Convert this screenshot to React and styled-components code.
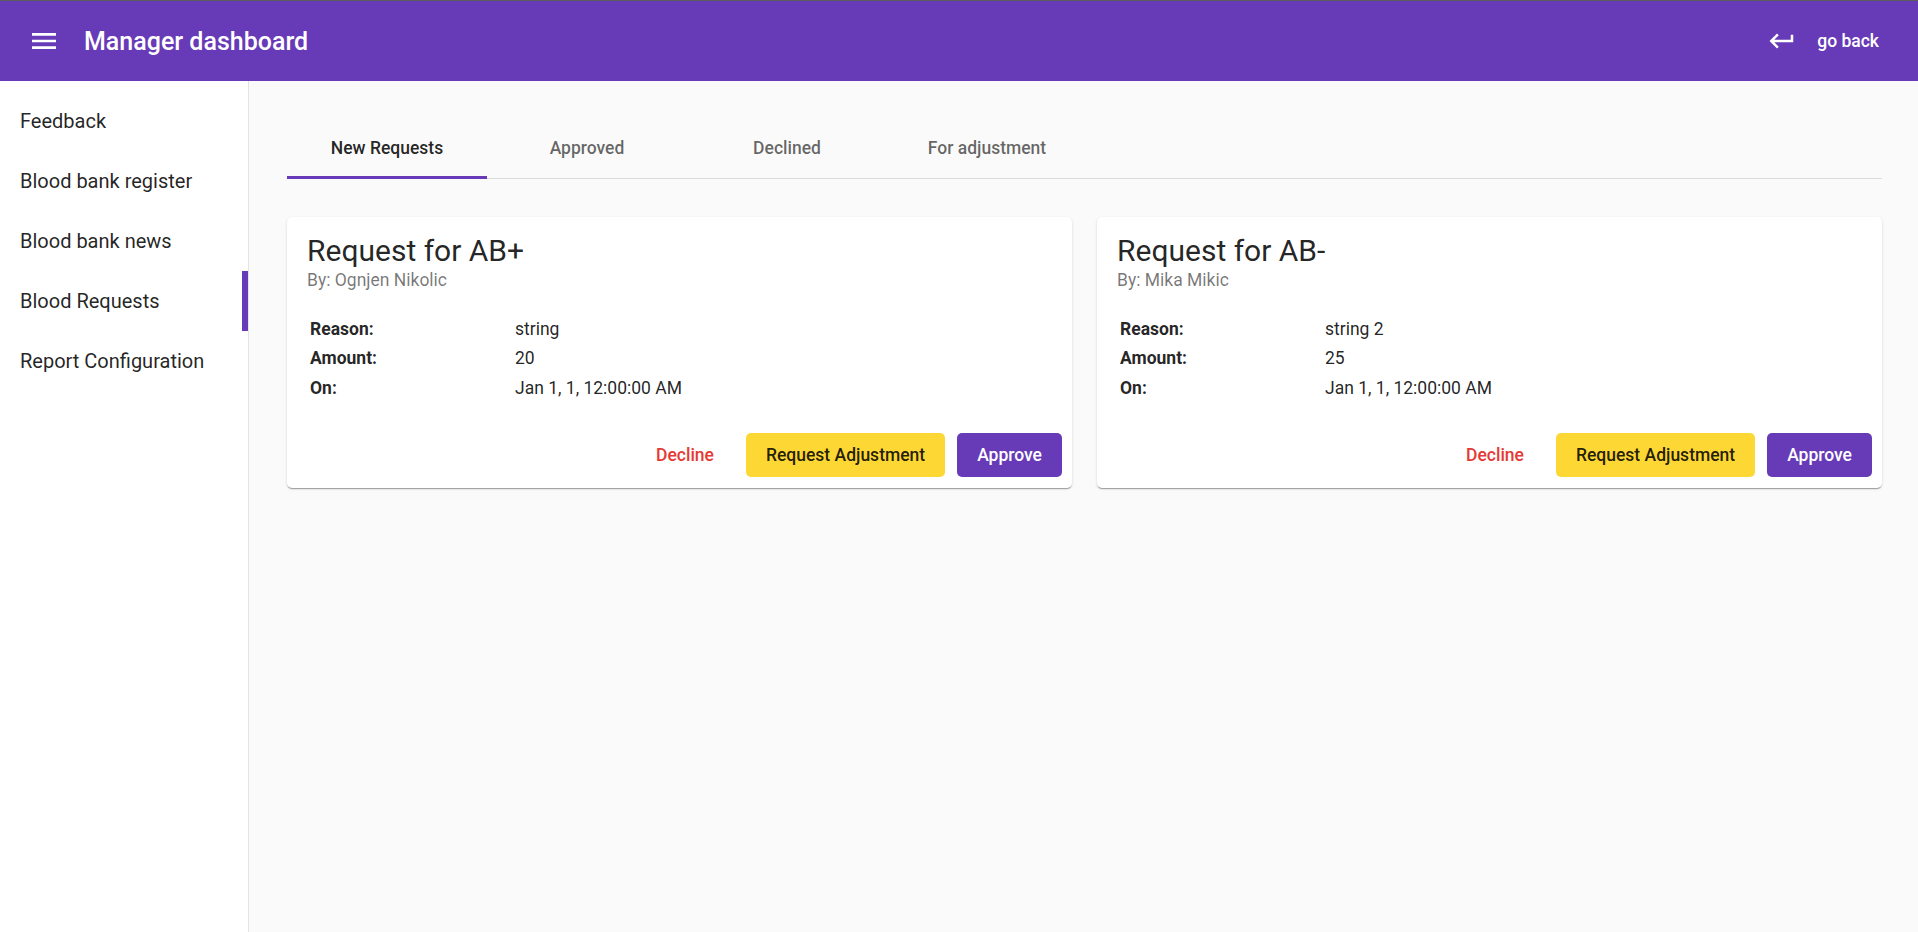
import React from 'react';
import styled, { createGlobalStyle, css } from 'styled-components';

const GlobalStyle = createGlobalStyle`
  html, body {
    margin: 0;
    padding: 0;
    background: #fafafa;
    font-family: Roboto, 'Liberation Sans', sans-serif;
  }
  * { box-sizing: border-box; }
`;

const Page = styled.div`
  height: 100vh;
  display: flex;
  flex-direction: column;
  border-top: 1px solid #5c5c5c;
  overflow: hidden;
`;

const Toolbar = styled.header`
  height: 80px;
  flex-shrink: 0;
  background-color: #673ab7;
  color: white;
  display: flex;
  align-items: center;
  padding: 0 20px;
`;

const MenuButton = styled.button`
  width: 48px;
  height: 48px;
  border: none;
  background: transparent;
  color: white;
  display: flex;
  align-items: center;
  justify-content: center;
  padding: 0;
  cursor: pointer;
`;

const Title = styled.h1`
  margin: 0 0 0 16px;
  font-size: 25px;
  font-weight: 500;
  letter-spacing: 0;
`;

const Spacer = styled.div`
  flex: 1;
`;

const BackButton = styled.button`
  display: flex;
  align-items: center;
  gap: 20px;
  height: 45px;
  padding: 0 19px 0 18px;
  border: none;
  background: transparent;
  color: white;
  font-family: inherit;
  font-size: 17.5px;
  font-weight: 500;
  cursor: pointer;
`;

const Body = styled.div`
  flex: 1;
  display: flex;
  min-height: 0;
`;

const Sidebar = styled.nav`
  width: 249px;
  flex-shrink: 0;
  background: white;
  border-right: 1px solid #e3e3e3;
  padding-top: 10px;
`;

const NavItem = styled.a`
  position: relative;
  display: flex;
  align-items: center;
  height: 60px;
  padding-left: 20px;
  font-size: 20px;
  color: rgba(0, 0, 0, 0.87);
  text-decoration: none;
  cursor: pointer;

  ${props => props.$active && css`
    &::after {
      content: '';
      position: absolute;
      right: 0;
      top: 0;
      bottom: 0;
      width: 6px;
      background: #673ab7;
    }
  `}
`;

const Main = styled.main`
  flex: 1;
  padding: 37px 36px 0 38px;
`;

const TabBar = styled.div`
  display: flex;
  border-bottom: 1px solid rgba(0, 0, 0, 0.12);
`;

const Tab = styled.div`
  position: relative;
  width: 200px;
  height: 60px;
  display: flex;
  align-items: center;
  justify-content: center;
  font-size: 17.5px;
  font-weight: 500;
  color: ${props => (props.$active ? 'rgba(0, 0, 0, 0.87)' : 'rgba(0, 0, 0, 0.6)')};
  cursor: pointer;

  ${props => props.$active && css`
    &::after {
      content: '';
      position: absolute;
      left: 0;
      right: 0;
      bottom: -1px;
      height: 3px;
      background: #673ab7;
    }
  `}
`;

const CardGrid = styled.div`
  display: grid;
  grid-template-columns: 1fr 1fr;
  gap: 25px;
  margin-top: 38px;
`;

const Card = styled.div`
  background: white;
  border-radius: 5px;
  box-shadow: 0 2px 1px -1px rgba(0, 0, 0, 0.2), 0 1px 1px 0 rgba(0, 0, 0, 0.14),
    0 1px 3px 0 rgba(0, 0, 0, 0.12);
  padding: 16px 10px 11px 20px;
  color: rgba(0, 0, 0, 0.87);
`;

const CardTitle = styled.div`
  font-size: 30px;
  line-height: 36px;
  font-weight: 400;
`;

const CardSubtitle = styled.div`
  font-size: 17.5px;
  line-height: 22px;
  color: rgba(0, 0, 0, 0.54);
`;

const Details = styled.div`
  display: grid;
  grid-template-columns: 208px 1fr;
  grid-auto-rows: 29.5px;
  align-items: center;
  margin-top: 23px;
  font-size: 17.5px;
`;

const Label = styled.div`
  padding-left: 3px;
  font-weight: 700;
`;

const Value = styled.div`
  font-weight: 400;
`;

const Actions = styled.div`
  display: flex;
  justify-content: flex-end;
  gap: 12px;
  margin-top: 30px;
`;

const variants = {
  text: css`
    background: transparent;
    color: #e53935;
  `,
  accent: css`
    background: #fdd835;
    color: rgba(0, 0, 0, 0.87);
  `,
  primary: css`
    background: #673ab7;
    color: white;
  `,
};

const ActionButton = styled.button`
  height: 44px;
  padding: 0 20px;
  border: none;
  border-radius: 5px;
  font-family: inherit;
  font-size: 17.5px;
  font-weight: 500;
  cursor: pointer;
  ${props => variants[props.$variant]}
`;

const MenuIcon = () => (
  <svg width="32" height="32" viewBox="0 0 24 24" fill="currentColor">
    <path d="M3 18h18v-2H3v2zm0-5h18v-2H3v2zm0-7v2h18V6H3z" />
  </svg>
);

const ReturnIcon = () => (
  <svg width="30" height="30" viewBox="0 0 24 24" fill="currentColor">
    <path d="M19 7v4H5.83l3.58-3.59L8 6l-6 6 6 6 1.41-1.41L5.83 13H21V7z" />
  </svg>
);

const navItems = [
  'Feedback',
  'Blood bank register',
  'Blood bank news',
  'Blood Requests',
  'Report Configuration',
];

const tabs = ['New Requests', 'Approved', 'Declined', 'For adjustment'];

const requests = [
  { group: 'AB+', by: 'Ognjen Nikolic', reason: 'string', amount: 20, on: 'Jan 1, 1, 12:00:00 AM' },
  { group: 'AB-', by: 'Mika Mikic', reason: 'string 2', amount: 25, on: 'Jan 1, 1, 12:00:00 AM' },
];

const RequestCard = ({ request }) => (
  <Card>
    <CardTitle>Request for {request.group}</CardTitle>
    <CardSubtitle>By: {request.by}</CardSubtitle>
    <Details>
      <Label>Reason:</Label>
      <Value>{request.reason}</Value>
      <Label>Amount:</Label>
      <Value>{request.amount}</Value>
      <Label>On:</Label>
      <Value>{request.on}</Value>
    </Details>
    <Actions>
      <ActionButton $variant="text">Decline</ActionButton>
      <ActionButton $variant="accent">Request Adjustment</ActionButton>
      <ActionButton $variant="primary">Approve</ActionButton>
    </Actions>
  </Card>
);

const App = () => {
  return (
    <>
      <GlobalStyle />
      <Page>
        <Toolbar>
          <MenuButton aria-label="menu">
            <MenuIcon />
          </MenuButton>
          <Title>Manager dashboard</Title>
          <Spacer />
          <BackButton>
            <ReturnIcon />
            go back
          </BackButton>
        </Toolbar>
        <Body>
          <Sidebar>
            {navItems.map(item => (
              <NavItem key={item} $active={item === 'Blood Requests'}>
                {item}
              </NavItem>
            ))}
          </Sidebar>
          <Main>
            <TabBar>
              {tabs.map((tab, i) => (
                <Tab key={tab} $active={i === 0}>
                  {tab}
                </Tab>
              ))}
            </TabBar>
            <CardGrid>
              {requests.map(r => (
                <RequestCard key={r.group} request={r} />
              ))}
            </CardGrid>
          </Main>
        </Body>
      </Page>
    </>
  );
};

export default App;
